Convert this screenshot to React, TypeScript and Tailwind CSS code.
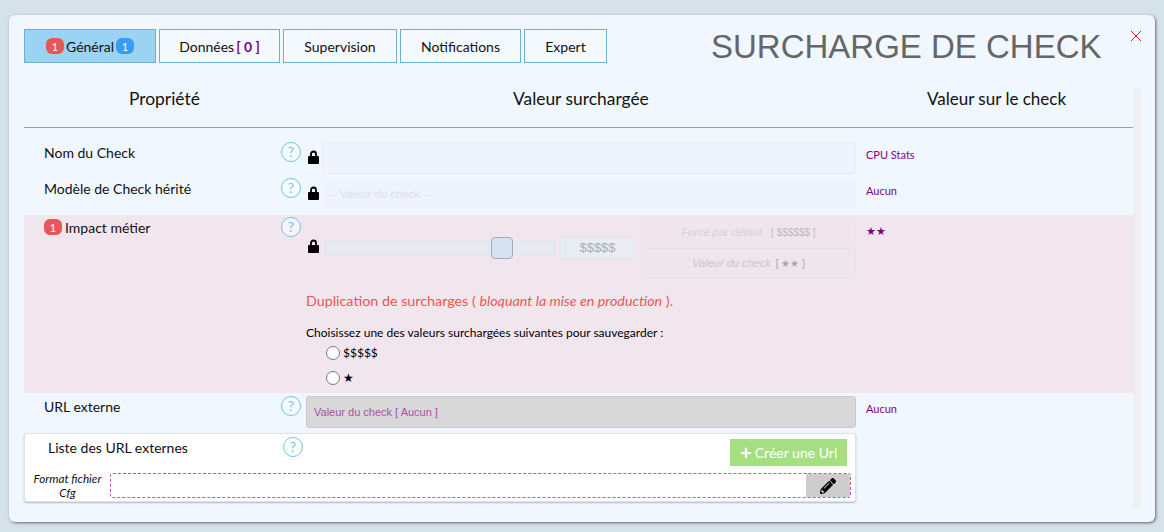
import React from 'react';
import { FaPencilAlt, FaPlus } from 'react-icons/fa';

const LATO = "font-['Lato','Open_Sans',sans-serif]";
const ARIAL = "font-['Liberation_Sans',Arial,sans-serif]";

const Badge = ({ color, children }: { color: string; children: React.ReactNode }) => (
  <span className={`inline-flex h-[16px] w-[18px] items-center justify-center rounded-[6px] text-[11px] leading-none text-white ${color}`}>
    {children}
  </span>
);

const Help = () => (
  <span className="flex h-[20px] w-[20px] shrink-0 items-center justify-center rounded-full border border-[#6cc5e6] bg-white/60 text-[14px] leading-none text-[#6cc5e6]">
    ?
  </span>
);

const Lock = () => (
  <svg className="h-[14px] w-[11px] shrink-0" viewBox="0 0 11 14">
    <path d="M3 6.5V4a2.5 2.5 0 0 1 5 0v2.5" fill="none" stroke="#000" strokeWidth="1.8" />
    <rect x="0" y="6" width="11" height="8" rx="1" fill="#000" />
  </svg>
);

const Tab = ({ active, width, children }: { active?: boolean; width: string; children: React.ReactNode }) => (
  <div className={`flex h-[34px] items-center justify-center gap-[2px] border border-[#6fb0d0] text-[14px] text-[#111] ${width} ${active ? 'bg-[#9bd4f3]' : 'bg-[#f3f9ff]'}`}>
    {children}
  </div>
);

const Label = ({ children }: { children: React.ReactNode }) => (
  <div className="mt-[1px] h-[20px] w-[257px] shrink-0 pl-[20px] text-[14px] leading-[20px] text-[#111]">{children}</div>
);

const CheckValue = ({ children }: { children: React.ReactNode }) => (
  <div className="ml-[10px] text-[11px] leading-[14px] text-[#800080]">{children}</div>
);

export default function App() {
  return (
    <div className={`h-[532px] w-[1164px] overflow-hidden bg-[#d6e2ea] pl-[9px] pt-[15px] ${LATO}`}>
      <div className="relative h-[507px] w-[1146px] rounded-[6px] bg-[#f0f7ff] pl-[15px] pt-[14px] shadow-[1px_1px_3px_rgba(0,0,0,0.55)]">
        {/* tabs + title */}
        <div className="flex h-[34px] gap-[3px]">
          <Tab active width="w-[132px]">
            <Badge color="bg-[#e95656]">1</Badge>
            <span>Général</span>
            <Badge color="bg-[#3a9bf0]">1</Badge>
          </Tab>
          <Tab width="w-[121px]">
            <span>Données</span>
            <span className="font-bold text-[#800080]">[ 0 ]</span>
          </Tab>
          <Tab width="w-[114px]">Supervision</Tab>
          <Tab width="w-[121px]">Notifications</Tab>
          <Tab width="w-[83px]">Expert</Tab>
          <div className={`ml-[101px] text-[33px] leading-[36px] text-[#666] ${ARIAL}`}>SURCHARGE DE CHECK</div>
        </div>
        <svg className="absolute left-[1122px] top-[16px] h-[10px] w-[10px]" viewBox="0 0 10 10">
          <path d="M0 0L10 10M10 0L0 10" stroke="#f01010" strokeWidth="1" fill="none" />
        </svg>

        <div className="mt-[25px] flex items-start">
          <div className="w-[1109px]">
            {/* column titles */}
            <div className="flex h-[40px] items-start border-b border-[#6fb0d0] pt-[1px] text-[17.4px] leading-[20px] text-[#111]">
              <div className="w-[282px] pl-[105px]">Propriété</div>
              <div className="w-[541px] pl-[207px]">Valeur surchargée</div>
              <div className="pl-[80px] text-[17px]">Valeur sur le check</div>
            </div>

            {/* Nom du Check */}
            <div className="flex h-[50px] pt-[14px]">
              <Label>Nom du Check</Label>
              <Help />
              <div className="ml-[7px] mt-[8px]"><Lock /></div>
              <div className="ml-[3px] h-[32px] w-[534px] rounded-[3px] border border-[#e6ebf5] bg-[#eef3fc]" />
              <CheckValue><span className="mt-[6px] block">CPU Stats</span></CheckValue>
            </div>

            {/* Modele */}
            <div className="flex h-[37px]">
              <Label>Modèle de Check hérité</Label>
              <Help />
              <div className="ml-[7px] mt-[8px]"><Lock /></div>
              <div className={`ml-[3px] flex h-[30px] w-[534px] items-center bg-[#eef3fd] pl-[7px] pt-[3px] text-[11.3px] text-[#dcdfee] ${ARIAL}`}>-- Valeur du check --</div>
              <CheckValue><span className="mt-[6px] block">Aucun</span></CheckValue>
            </div>

            {/* Impact metier */}
            <div className="flex h-[178px] bg-[#f2e6ee] pt-[2px]">
              <div className="flex h-[20px] w-[257px] shrink-0 items-center gap-[3px] pl-[20px] text-[14px] text-[#111]">
                <Badge color="bg-[#e95656]">1</Badge>
                <span>Impact métier</span>
              </div>
              <Help />
              <div className="w-[555px] shrink-0 pl-[5px]">
                <div className="flex h-[61px]">
                  <div className="ml-[2px] mt-[22px]"><Lock /></div>
                  <div className="relative ml-[6px] mt-[24px] h-[14px] w-[230px] rounded-[2px] border border-[#dde6ef] bg-[#e4ebf3]">
                    <div className="absolute left-[165px] top-[-5px] h-[22px] w-[22px] rounded-[4px] border border-[#a8a8b2] bg-[#d5e2ef]" />
                  </div>
                  <div className={`ml-[5px] mt-[20px] flex h-[22px] w-[75px] items-center justify-center rounded-[2px] border border-[#e2e9f0] bg-[#e8edf3] text-[13px] text-[#a8adb5] ${ARIAL}`}>$$$$$</div>
                  <div className={`ml-[6px] flex w-[215px] flex-col gap-[1px] text-[#c9c5cb] ${ARIAL}`}>
                    <div className="flex h-[30px] items-center justify-center gap-[9px] rounded-[3px] border border-[#ebe0e8] bg-[#f1e5ed] text-[11px] italic">
                      <span className="text-[#d4d0d6]">Forcé par défaut</span>
                      <span className="text-[10px] not-italic text-[#bdb9c0]">[ $$$$$$ ]</span>
                    </div>
                    <div className="flex h-[30px] items-center justify-center gap-[5px] rounded-[3px] border border-[#e8dfe6] bg-[#efe5ec] text-[11px] italic">
                      <span>Valeur du check</span>
                      <span className="text-[10px] not-italic text-[#a9a5ac]">[ ★★ ]</span>
                    </div>
                  </div>
                </div>
                <div className="mt-[13px] text-[14.3px] leading-[20px] text-[#e95656]">
                  Duplication de surcharges ( <em>bloquant la mise en production</em> ).
                </div>
                <div className="mt-[13px] text-[12px] leading-[18px] text-black">Choisissez une des valeurs surchargées suivantes pour sauvegarder :</div>
                <label className="ml-[20px] mt-[1px] flex h-[20px] items-center gap-[3px] text-[12px] text-black">
                  <input type="radio" name="impact" className="m-0 h-[14px] w-[14px] appearance-auto" />
                  <span>$$$$$</span>
                </label>
                <label className="ml-[20px] mt-[5px] flex h-[20px] items-center gap-[3px] text-[12px] text-black">
                  <input type="radio" name="impact" className="m-0 h-[14px] w-[14px] appearance-auto" />
                  <span>★</span>
                </label>
              </div>
              <CheckValue><span className="mt-[7px] block">★★</span></CheckValue>
            </div>

            {/* URL externe */}
            <div className="flex h-[40px] pt-[3px]">
              <Label>URL externe</Label>
              <Help />
              <div className={`ml-[5px] flex h-[32px] w-[550px] items-center rounded-[3px] border border-[#c9c9c9] bg-[#d8d8d8] pl-[7px] text-[11px] text-[#a651a6] ${ARIAL}`}>
                Valeur du check [ Aucun ]
              </div>
              <CheckValue><span className="mt-[6px] block">Aucun</span></CheckValue>
            </div>

            {/* Liste des URL */}
            <div className="h-[69px] w-[832px] rounded-[3px] border border-[#e2e2e6] bg-white shadow-[0_1px_2px_rgba(0,0,0,0.25)]">
              <div className="flex h-[39px] pt-[3px]">
                <div className="mt-[1px] w-[258px] shrink-0 pl-[23px] text-[14px] leading-[20px] text-[#111]">Liste des URL externes</div>
                <Help />
                <button className="ml-[427px] mt-[2px] flex h-[27px] w-[117px] items-center justify-center gap-[3px] bg-[#a5df7f] text-[14px] text-white">
                  <FaPlus className="h-[12px] w-[12px]" />
                  Créer une Url
                </button>
              </div>
              <div className="flex items-start">
                <div className="-mt-[2px] w-[85px] shrink-0 text-center text-[11.7px] italic leading-[14px] text-[#111]">Format fichier<br />Cfg</div>
                <div className="flex h-[25px] w-[741px] justify-end rounded-[3px] border border-dashed border-[#b45ab4]">
                  <div className="flex w-[44px] items-center justify-center bg-[#cdcdcd]">
                    <FaPencilAlt className="h-[16px] w-[16px] text-black" />
                  </div>
                </div>
              </div>
            </div>
          </div>
          {/* scrollbar track */}
          <div className="h-[420px] w-[8px] bg-[#eeeff1]" />
        </div>
      </div>
    </div>
  );
}
